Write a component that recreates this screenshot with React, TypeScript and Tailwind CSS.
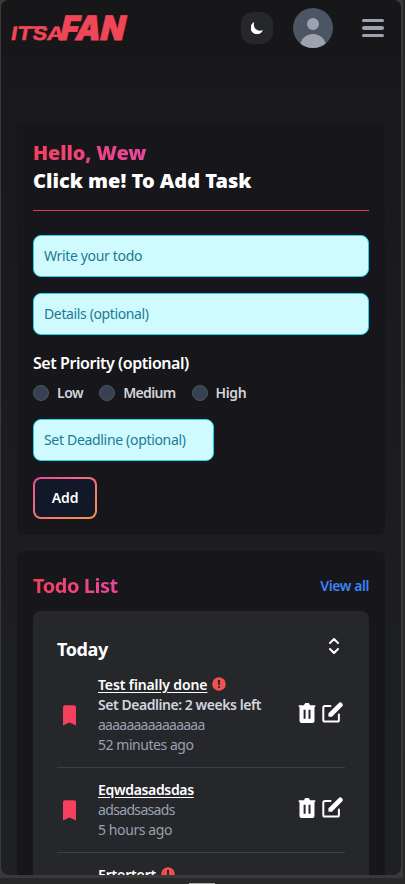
import React from "react";

const inputBox =
  "flex h-[42px] items-center rounded-lg border border-[#22d3ee] bg-[#cffafe] px-2.5 text-sm text-[#1b7b95]";

function Logo() {
  return (
    <svg width="130" height="48" viewBox="0 0 130 48" className="block overflow-visible" fill="#f14658" aria-label="ITSA FAN">
      <g fontFamily="Inter, 'Liberation Sans', sans-serif" stroke="#f14658">
        <text transform="translate(0 36) skewX(-10)" fontSize="18.500" fontWeight="700" textLength="53" lengthAdjust="spacingAndGlyphs" strokeWidth="0.3">
          ITSA
        </text>
        <text transform="translate(48.500 36) skewX(-13)" fontSize="33.500" fontWeight="900" textLength="64.500" lengthAdjust="spacingAndGlyphs" strokeWidth="0.8">
          FAN
        </text>
      </g>
      <path d="M9 22.300h27.500l-.6 2.500H8.500z" />
    </svg>
  );
}

function Moon() {
  return (
    <svg width="12" height="12" viewBox="0 0 12 12" fill="#fff">
      <path d="M3.300 0A6.500 6.500 0 0 0 2.800 2.600 6.200 6.200 0 0 0 9 8.800 7 7 0 0 0 12 8.100 6.400 6.400 0 1 1 3.300 0z" />
    </svg>
  );
}

function Avatar() {
  return (
    <div className="h-10 w-10 overflow-hidden rounded-full bg-[#4b5563]">
      <svg viewBox="0 0 40 40" width="40" height="40" fill="#9ca3af">
        <circle cx="20" cy="16" r="6" />
        <path d="M6.500 38.500C8 31 12.500 26 20 26s12 5 13.500 12.500V42h-27z" />
      </svg>
    </div>
  );
}

function Alert() {
  return (
    <svg width="14" height="14" viewBox="0 0 14 14" className="relative -top-px">
      <circle cx="7" cy="7" r="6.800" fill="#ef5050" />
      <path d="M5.900 3h2.200l-.3 4.900H6.200z" fill="#26272b" />
      <circle cx="7" cy="10" r="1.100" fill="#26272b" />
    </svg>
  );
}

function Bookmark() {
  return (
    <svg width="13" height="21" viewBox="0 0 13 21" fill="#f43f5e">
      <path d="M0 2.200A1.900 1.900 0 0 1 1.900.3h9.200A1.900 1.900 0 0 1 13 2.200V20.600L6.500 17.400 0 20.600z" />
    </svg>
  );
}

function Trash() {
  return (
    <svg width="18" height="20" viewBox="0 0 18 20" fill="#fff">
      <path
        fillRule="evenodd"
        d="M1.300 2.200H6L6.700.7Q7 .1 7.600.1h2.800q.6 0 .9.600l.7 1.500h4.700q.8 0 .8.800t-.8.900h-.2v14q0 2.100-2.100 2.100H3.600q-2.100 0-2.100-2.100v-14h-.2Q.5 3.900.5 3t.8-.8zM5.600 6.800v9h2v-9zm4.900 0v9h2v-9z"
      />
    </svg>
  );
}

function Edit() {
  return (
    <svg width="21" height="21" viewBox="0 0 21 21" fill="none" stroke="#fff">
      <path d="M8.500 4H3Q1.300 4 1.300 5.700v12.200q0 1.700 1.700 1.700h12.200q1.700 0 1.700-1.700V12.500" strokeWidth="2" strokeLinecap="round" strokeLinejoin="round" />
      <path d="M9 12.200 18.300 2.900" strokeWidth="4.800" strokeLinecap="round" />
      <path d="M6.300 14.700l.6-4.300 3.800 3.500z" fill="#fff" stroke="none" />
    </svg>
  );
}

type Line = { text: string; className: string };
type Todo = { title: string; titleClass: string; urgent?: boolean; lines: Line[] };

const todos: Todo[] = [
  {
    title: "Test finally done",
    titleClass: "tracking-[-0.12px]",
    urgent: true,
    lines: [
      { text: "Set Deadline: 2 weeks left", className: "font-semibold text-gray-300 tracking-[-0.45px]" },
      { text: "aaaaaaaaaaaaaaa", className: "text-gray-400 tracking-[-0.75px]" },
      { text: "52 minutes ago", className: "text-gray-400 tracking-[-0.46px]" },
    ],
  },
  {
    title: "Eqwdasadsdas",
    titleClass: "tracking-[-0.33px]",
    lines: [
      { text: "adsadsasads", className: "text-gray-400 tracking-[-0.66px]" },
      { text: "5 hours ago", className: "text-gray-400 tracking-[-0.4px]" },
    ],
  },
  {
    title: "Ertertert",
    titleClass: "tracking-[-0.15px]",
    urgent: true,
    lines: [],
  },
];

function TodoRow({ todo }: { todo: Todo }) {
  return (
    <li className="flex min-h-[84px] items-center border-b border-gray-700 py-3 last:h-[104px] last:items-start last:border-0">
      <div className="w-[41px] pl-1.5 [li:last-child>&]:pt-7">
        <Bookmark />
      </div>
      <div className="min-w-0 flex-1 text-sm leading-5">
        <div className="flex h-5 items-center gap-[5px] whitespace-nowrap">
          <span className={"font-semibold text-white underline underline-offset-2 " + todo.titleClass}>{todo.title}</span>
          {todo.urgent && <Alert />}
        </div>
        {todo.lines.map((l) => (
          <p key={l.text} className={"h-5 whitespace-nowrap " + l.className}>{l.text}</p>
        ))}
      </div>
      <div className="flex items-center gap-1.5 pr-0.5 pb-[5px] [li:last-child>&]:pt-7">
        <Trash />
        <Edit />
      </div>
    </li>
  );
}

const priorities = [
  { label: "Low", className: "mr-4 tracking-[-0.5px]" },
  { label: "Medium", className: "mr-4 tracking-[-0.65px]" },
  { label: "High", className: "tracking-[-0.4px]" },
];

export default function App() {
  return (
    <div className="flex h-[884px] w-[405px] flex-col overflow-hidden bg-[#282829] font-['Noto_Sans',sans-serif]">
      <div className="h-[878px] w-[403px] bg-[#393939] pl-px">
        <div className="h-[875px] w-[400px] overflow-hidden rounded-lg bg-linear-to-b from-[#18181b] to-[#1f2023]">
          <header className="flex h-[58px] items-center bg-[#17171a] pb-0.5 pl-[9px]">
            <div className="w-[231px]"><Logo /></div>
            <div className="flex h-8 w-8 items-center justify-center rounded-xl bg-[#26272b]"><Moon /></div>
            <div className="ml-5"><Avatar /></div>
            <div className="ml-[29px] flex w-[22px] flex-col gap-1">
              <span className="h-[3.500px] rounded-xs bg-[#9ca3af]" />
              <span className="h-[3.500px] rounded-xs bg-[#9ca3af]" />
              <span className="h-[3.500px] rounded-xs bg-[#9ca3af]" />
            </div>
          </header>
          <main className="px-4 pt-[65px]">
            <section className="h-[412px] rounded-lg bg-[#17161a] px-4 pt-4">
              <div className="h-[72px] border-b border-[#e23a55] text-xl leading-7 font-black whitespace-nowrap">
                <div className="w-fit bg-linear-to-r from-[#f43f5e] to-[#e6479a] bg-clip-text tracking-[-0.2px] text-transparent">Hello, Wew</div>
                <div className="text-white">Click me! To Add Task</div>
              </div>
              <div className={inputBox + " mt-6 tracking-[-0.34px]"}>Write your todo</div>
              <div className={inputBox + " mt-4 tracking-[-0.37px]"}>Details (optional)</div>
              <h3 className="mt-4 h-6 leading-6 font-semibold tracking-[-0.45px] text-white">Set Priority (optional)</h3>
              <div className="mt-2 flex h-5 items-center text-sm font-semibold text-[#d1d5db]">
                {priorities.map((p) => (
                  <label key={p.label} className={"flex items-center gap-2 " + p.className}>
                    <span className="h-4 w-4 rounded-full border border-[#4b5563] bg-[#374151]" />
                    {p.label}
                  </label>
                ))}
              </div>
              <div className={inputBox + " mt-4 w-[181px] tracking-[-0.32px]"}>Set Deadline (optional)</div>
              <button className="mt-4 block h-[42px] w-16 rounded-lg bg-linear-to-br from-[#ec4899] to-[#fb923c] p-0.5">
                <span className="flex h-full items-center justify-center rounded-md bg-[#111827] text-sm font-semibold tracking-[-0.1px] text-white">Add</span>
              </button>
            </section>
            <section className="mt-4 h-[400px] rounded-lg bg-[#17161a] px-4 pt-4">
              <div className="flex h-9 items-center justify-between pt-0.5">
                <h2 className="bg-linear-to-r from-[#f43f5e] to-[#e6479a] bg-clip-text text-xl leading-9 font-bold tracking-[-0.45px] text-transparent">Todo List</h2>
                <a className="text-sm font-semibold tracking-[-0.43px] text-[#3b82f6]">View all</a>
              </div>
              <div className="mt-2 h-[340px] rounded-lg bg-[#26272b] px-6 pt-6">
                <div className="flex h-7 items-center justify-between pr-1.5">
                  <h3 className="text-lg font-bold tracking-[-0.4px] text-white">Today</h3>
                  <svg width="10" height="16" viewBox="0 0 10 16" fill="none" stroke="#fff" strokeWidth="2" strokeLinecap="round" strokeLinejoin="round" className="relative -top-[3px]">
                    <path d="M1 5l4-4 4 4M1 11l4 4 4-4" />
                  </svg>
                </div>
                <ul>
                  {todos.map((t) => <TodoRow key={t.title} todo={t} />)}
                </ul>
              </div>
            </section>
          </main>
        </div>
      </div>
      <div className="flex h-1.5 items-end pl-[189px]"><span className="h-px w-[26px] bg-[#aaaaaa]" /></div>
    </div>
  );
}
